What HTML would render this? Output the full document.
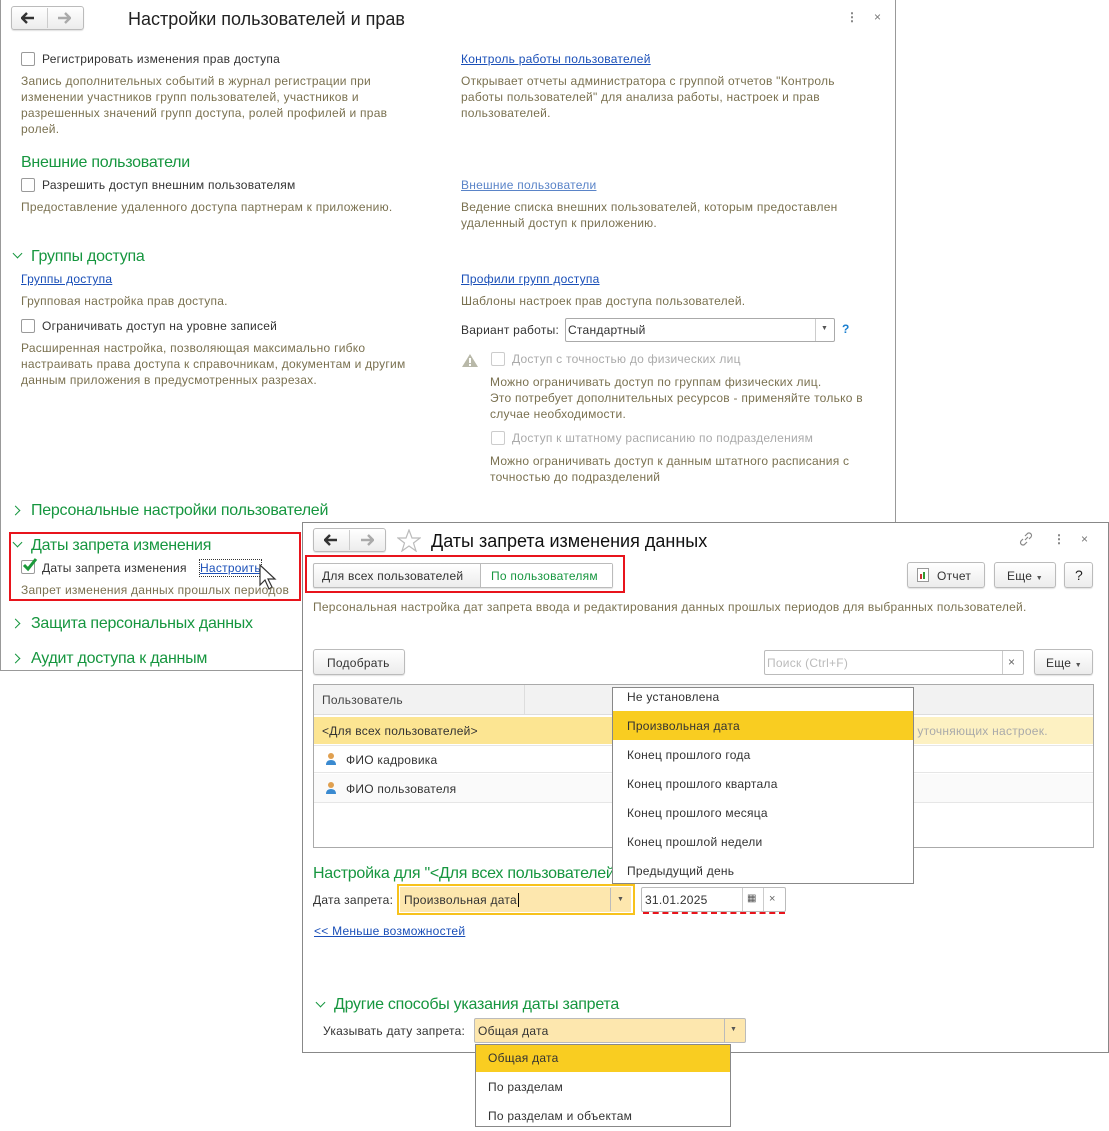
<!DOCTYPE html>
<html><head><meta charset="utf-8"><style>
*{box-sizing:border-box;margin:0;padding:0}
body{width:1109px;height:1131px;background:#fff;position:relative;overflow:hidden;font-family:"Liberation Sans",Arial,sans-serif;font-size:12px;color:#333;letter-spacing:0.25px}
.a{position:absolute;white-space:nowrap;line-height:16px}
.d{color:#7a7150}
.g{color:#16963f;font-size:16px;letter-spacing:-0.25px;line-height:18px}
.l{color:#1a4fb8;text-decoration:underline}
.gr{color:#aaa}
.cb{position:absolute;width:14px;height:14px;border:1px solid #9a9a9a;border-radius:2px;background:#fff}
.cb.dis{border-color:#ccc}
.btn{position:absolute;border:1px solid #bbb;border-radius:3px;background:linear-gradient(#fff,#ececec);box-shadow:0 1px 1px rgba(0,0,0,.12);text-align:center;line-height:22px}
.box{position:absolute;border:1px solid #999}
.chev{position:absolute;width:7px;height:7px;border-right:1.5px solid #16963f;border-bottom:1.5px solid #16963f}
.dn{transform:rotate(45deg)}
.rt{transform:rotate(-45deg)}
</style></head><body>

<!-- main window -->
<div class="box" style="left:0;top:0;width:896px;height:671px;border-color:#999;border-top:none"></div>
<div class="btn" style="left:11px;top:6px;width:73px;height:24px"></div>
<div style="position:absolute;left:47px;top:8px;width:1px;height:20px;background:#ccc"></div>
<svg style="position:absolute;left:21px;top:12px" width="14" height="12"><path d="M1 6 H13 M6 1 L1 6 L6 11" fill="none" stroke="#333" stroke-width="2.4"/></svg>
<svg style="position:absolute;left:57px;top:12px" width="14" height="12"><path d="M1 6 H13 M8 1 L13 6 L8 11" fill="none" stroke="#aaa" stroke-width="2.4"/></svg>
<div class="a" style="left:128px;top:8px;font-size:18px;color:#222;letter-spacing:0;line-height:22px">Настройки пользователей и прав</div>
<div class="a" style="left:846px;top:9px;color:#777;font-weight:bold">&#8942;</div>
<div class="a" style="left:874px;top:9px;color:#777">&#215;</div>

<div class="cb" style="left:21px;top:52px"></div>
<div class="a" style="left:42px;top:51px">Регистрировать изменения прав доступа</div>
<div class="a d" style="left:21px;top:73px">Запись дополнительных событий в журнал регистрации при<br>изменении участников групп пользователей, участников и<br>разрешенных значений групп доступа, ролей профилей и прав<br>ролей.</div>
<div class="a g" style="left:21px;top:154px">Внешние пользователи</div>
<div class="cb" style="left:21px;top:178px"></div>
<div class="a" style="left:42px;top:177px">Разрешить доступ внешним пользователям</div>
<div class="a d" style="left:21px;top:199px">Предоставление удаленного доступа партнерам к приложению.</div>

<div class="chev dn" style="left:14px;top:250px"></div>
<div class="a g" style="left:31px;top:248px">Группы доступа</div>
<div class="a l" style="left:21px;top:271px">Группы доступа</div>
<div class="a d" style="left:21px;top:293px">Групповая настройка прав доступа.</div>
<div class="cb" style="left:21px;top:319px"></div>
<div class="a" style="left:42px;top:318px">Ограничивать доступ на уровне записей</div>
<div class="a d" style="left:21px;top:340px">Расширенная настройка, позволяющая максимально гибко<br>настраивать права доступа к справочникам, документам и другим<br>данным приложения в предусмотренных разрезах.</div>

<div class="a l" style="left:461px;top:51px">Контроль работы пользователей</div>
<div class="a d" style="left:461px;top:73px">Открывает отчеты администратора с группой отчетов "Контроль<br>работы пользователей" для анализа работы, настроек и прав<br>пользователей.</div>
<div class="a l" style="left:461px;top:177px;color:#5a84c8">Внешние пользователи</div>
<div class="a d" style="left:461px;top:199px">Ведение списка внешних пользователей, которым предоставлен<br>удаленный доступ к приложению.</div>
<div class="a l" style="left:461px;top:271px">Профили групп доступа</div>
<div class="a d" style="left:461px;top:293px">Шаблоны настроек прав доступа пользователей.</div>
<div class="a" style="left:461px;top:322px">Вариант работы:</div>
<div class="box" style="left:565px;top:318px;width:270px;height:24px;border-color:#aaa;border-radius:2px"></div>
<div style="position:absolute;left:815px;top:319px;width:1px;height:22px;background:#ccc"></div>
<div class="a" style="left:568px;top:322px">Стандартный</div>
<div class="a" style="left:821px;top:321px;font-size:7px;color:#555">&#9660;</div>
<div class="a" style="left:842px;top:321px;color:#1a7fd0;font-weight:bold">?</div>
<svg style="position:absolute;left:461px;top:353px" width="18" height="15"><path d="M9 1 L17 14 L1 14 Z" fill="#b8b8a8"/><rect x="8" y="5" width="2" height="5" fill="#fff"/><rect x="8" y="11" width="2" height="2" fill="#fff"/></svg>
<div class="cb dis" style="left:491px;top:352px"></div>
<div class="a gr" style="left:512px;top:351px">Доступ с точностью до физических лиц</div>
<div class="a d" style="left:490px;top:374px">Можно ограничивать доступ по группам физических лиц.<br>Это потребует дополнительных ресурсов - применяйте только в<br>случае необходимости.</div>
<div class="cb dis" style="left:491px;top:431px"></div>
<div class="a gr" style="left:512px;top:430px">Доступ к штатному расписанию по подразделениям</div>
<div class="a d" style="left:490px;top:453px">Можно ограничивать доступ к данным штатного расписания с<br>точностью до подразделений</div>

<div class="chev rt" style="left:12px;top:507px"></div>
<div class="a g" style="left:31px;top:502px">Персональные настройки пользователей</div>
<div style="position:absolute;left:9px;top:532px;width:292px;height:69px;border:2px solid #e8141c"></div>
<div class="chev dn" style="left:14px;top:539px"></div>
<div class="a g" style="left:31px;top:537px">Даты запрета изменения</div>
<div class="cb" style="left:21px;top:560px"></div>
<svg style="position:absolute;left:22px;top:557px" width="16" height="16"><path d="M2 8 L6 12 L14 2" fill="none" stroke="#1a9a3a" stroke-width="3"/></svg>
<div class="a" style="left:42px;top:560px">Даты запрета изменения</div>
<div class="a l" style="left:200px;top:560px;outline:1px dotted #333">Настроить</div>
<svg style="position:absolute;left:258px;top:564px" width="20" height="28"><path d="M2 1 L2 21 L7 16 L11 25 L14 23 L10 15 L17 15 Z" fill="#fff" stroke="#333" stroke-width="1.2"/></svg>
<div class="a d" style="left:21px;top:582px">Запрет изменения данных прошлых периодов</div>
<div class="chev rt" style="left:12px;top:620px"></div>
<div class="a g" style="left:31px;top:615px">Защита персональных данных</div>
<div class="chev rt" style="left:12px;top:655px"></div>
<div class="a g" style="left:31px;top:650px">Аудит доступа к данным</div>

<!-- dialog -->
<div class="box" style="left:302px;top:522px;width:807px;height:531px;background:#fff;border-color:#888"></div>
<div class="btn" style="left:313px;top:528px;width:73px;height:24px"></div>
<div style="position:absolute;left:349px;top:530px;width:1px;height:20px;background:#ccc"></div>
<svg style="position:absolute;left:324px;top:534px" width="14" height="12"><path d="M1 6 H13 M6 1 L1 6 L6 11" fill="none" stroke="#333" stroke-width="2.4"/></svg>
<svg style="position:absolute;left:360px;top:534px" width="14" height="12"><path d="M1 6 H13 M8 1 L13 6 L8 11" fill="none" stroke="#aaa" stroke-width="2.4"/></svg>
<svg style="position:absolute;left:397px;top:529px" width="24" height="23"><path d="M12 1 L15 9 L23 9 L16.5 14 L19 22 L12 17 L5 22 L7.5 14 L1 9 L9 9 Z" fill="none" stroke="#bbb" stroke-width="1.2"/></svg>
<div class="a" style="left:431px;top:530px;font-size:18px;color:#111;letter-spacing:0;line-height:22px">Даты запрета изменения данных</div>
<svg style="position:absolute;left:1018px;top:531px" width="16" height="16"><path d="M7 9 L10 6 M5 8 L3 10 A2.5 2.5 0 0 0 7 13 L9 11 M11 8 L13 6 A2.5 2.5 0 0 0 9 3 L7 5" fill="none" stroke="#888" stroke-width="1.2"/></svg>
<div class="a" style="left:1053px;top:531px;color:#777;font-weight:bold">&#8942;</div>
<div class="a" style="left:1081px;top:531px;color:#777">&#215;</div>

<div style="position:absolute;left:305px;top:555px;width:320px;height:38px;border:2px solid #e8141c"></div>
<div class="btn" style="left:313px;top:563px;width:300px;height:25px;border-radius:2px"></div>
<div style="position:absolute;left:480px;top:564px;width:1px;height:23px;background:#bbb"></div>
<div style="position:absolute;left:481px;top:564px;width:131px;height:23px;background:#fff"></div>
<div class="a" style="left:322px;top:568px">Для всех пользователей</div>
<div class="a" style="left:491px;top:568px;color:#16963f">По пользователям</div>
<div class="btn" style="left:907px;top:562px;width:78px;height:26px"></div>
<svg style="position:absolute;left:917px;top:568px" width="12" height="14"><rect x="0.5" y="0.5" width="11" height="13" fill="#fff" stroke="#999"/><rect x="3" y="6" width="2" height="5" fill="#c33"/><rect x="6" y="4" width="2" height="7" fill="#393"/></svg>
<div class="a" style="left:937px;top:568px">Отчет</div>
<div class="btn" style="left:994px;top:562px;width:62px;height:26px"></div>
<div class="a" style="left:1007px;top:568px">Еще <span style="font-size:7px;color:#555">&#9660;</span></div>
<div class="btn" style="left:1064px;top:562px;width:29px;height:26px"></div>
<div class="a" style="left:1075px;top:567px;font-size:14px;color:#222">?</div>
<div class="a d" style="left:313px;top:599px">Персональная настройка дат запрета ввода и редактирования данных прошлых периодов для выбранных пользователей.</div>

<div class="btn" style="left:313px;top:649px;width:92px;height:26px"></div>
<div class="a" style="left:327px;top:655px">Подобрать</div>
<div class="box" style="left:764px;top:650px;width:260px;height:25px;border-color:#bbb;border-radius:2px"></div>
<div style="position:absolute;left:1002px;top:651px;width:1px;height:23px;background:#ccc"></div>
<div class="a" style="left:767px;top:655px;color:#bbb">Поиск (Ctrl+F)</div>
<div class="a" style="left:1008px;top:654px;color:#666">&#215;</div>
<div class="btn" style="left:1034px;top:649px;width:59px;height:26px"></div>
<div class="a" style="left:1046px;top:655px">Еще <span style="font-size:7px;color:#555">&#9660;</span></div>

<div class="box" style="left:313px;top:684px;width:781px;height:164px;border-color:#aaa"></div>
<div style="position:absolute;left:314px;top:685px;width:779px;height:30px;background:#f2f2f2;border-bottom:1px solid #ddd"></div>
<div style="position:absolute;left:524px;top:685px;width:1px;height:30px;background:#ddd"></div>
<div class="a" style="left:322px;top:692px;color:#444">Пользователь</div>
<div style="position:absolute;left:314px;top:717px;width:779px;height:27px;background:#fdf1c2"></div>
<div style="position:absolute;left:314px;top:717px;width:300px;height:27px;background:#fce592"></div>
<div class="a" style="left:322px;top:723px">&lt;Для всех пользователей&gt;</div>
<div class="a" style="left:908px;top:723px;color:#aaa">т уточняющих настроек.</div>
<div style="position:absolute;left:314px;top:745px;width:779px;height:28px;border-top:1px solid #e6e6e6;border-bottom:1px solid #e6e6e6"></div>
<div style="position:absolute;left:314px;top:774px;width:779px;height:29px;background:#fafafa;border-bottom:1px solid #e6e6e6"></div>
<svg style="position:absolute;left:325px;top:752px" width="12" height="14"><circle cx="6" cy="4" r="3" fill="#e0a050"/><path d="M1 13 Q1 8 6 8 Q11 8 11 13 Z" fill="#3a8ad0"/></svg>
<div class="a" style="left:346px;top:752px">ФИО кадровика</div>
<svg style="position:absolute;left:325px;top:781px" width="12" height="14"><circle cx="6" cy="4" r="3" fill="#e0a050"/><path d="M1 13 Q1 8 6 8 Q11 8 11 13 Z" fill="#3a8ad0"/></svg>
<div class="a" style="left:346px;top:781px">ФИО пользователя</div>

<div class="a g" style="left:313px;top:865px">Настройка для "&lt;Для всех пользователей</div>
<div class="a" style="left:313px;top:892px">Дата запрета:</div>
<div style="position:absolute;left:397px;top:884px;width:238px;height:31px;border:2px solid #f7c21c"></div>
<div style="position:absolute;left:400px;top:887px;width:231px;height:25px;background:#fde7ae"></div>
<div style="position:absolute;left:610px;top:888px;width:1px;height:23px;background:#bbb"></div>
<div class="a" style="left:404px;top:892px">Произвольная дата<span style="border-left:1px solid #000;margin-left:1px"></span></div>
<div class="a" style="left:617px;top:892px;font-size:7px;color:#555">&#9660;</div>
<div class="box" style="left:641px;top:887px;width:145px;height:25px;border-color:#bbb;border-radius:2px"></div>
<div style="position:absolute;left:742px;top:888px;width:1px;height:23px;background:#ccc"></div>
<div style="position:absolute;left:763px;top:888px;width:1px;height:23px;background:#ccc"></div>
<div class="a" style="left:645px;top:892px">31.01.2025</div>
<div class="a" style="left:747px;top:891px;font-size:10px;color:#555">&#9638;</div>
<div class="a" style="left:769px;top:891px;color:#666;font-size:11px">&#215;</div>
<div style="position:absolute;left:643px;top:912px;width:142px;height:0;border-top:2px dashed #e8141c"></div>
<div class="a l" style="left:314px;top:923px">&lt;&lt; Меньше возможностей</div>

<div class="chev dn" style="left:317px;top:999px"></div>
<div class="a g" style="left:334px;top:996px">Другие способы указания даты запрета</div>
<div class="a" style="left:323px;top:1023px">Указывать дату запрета:</div>
<div class="box" style="left:474px;top:1018px;width:272px;height:25px;border-color:#bbb;background:#fde7ae;border-radius:2px"></div>
<div style="position:absolute;left:724px;top:1019px;width:1px;height:23px;background:#bbb"></div>
<div class="a" style="left:478px;top:1023px">Общая дата</div>
<div class="a" style="left:730px;top:1022px;font-size:7px;color:#555">&#9660;</div>

<!-- popup 1 -->
<div class="box" style="left:612px;top:687px;width:302px;height:197px;background:#fff;border-color:#888"></div>
<div style="position:absolute;left:613px;top:711px;width:300px;height:29px;background:#f9cd21"></div>
<div class="a" style="left:627px;top:689px">Не установлена</div>
<div class="a" style="left:627px;top:718px">Произвольная дата</div>
<div class="a" style="left:627px;top:747px">Конец прошлого года</div>
<div class="a" style="left:627px;top:776px">Конец прошлого квартала</div>
<div class="a" style="left:627px;top:805px">Конец прошлого месяца</div>
<div class="a" style="left:627px;top:834px">Конец прошлой недели</div>
<div class="a" style="left:627px;top:863px">Предыдущий день</div>

<!-- popup 2 -->
<div class="box" style="left:475px;top:1044px;width:256px;height:83px;background:#fff;border-color:#888"></div>
<div style="position:absolute;left:476px;top:1045px;width:254px;height:27px;background:#f9cd21"></div>
<div class="a" style="left:488px;top:1050px">Общая дата</div>
<div class="a" style="left:488px;top:1079px">По разделам</div>
<div class="a" style="left:488px;top:1108px">По разделам и объектам</div>
</body></html>
